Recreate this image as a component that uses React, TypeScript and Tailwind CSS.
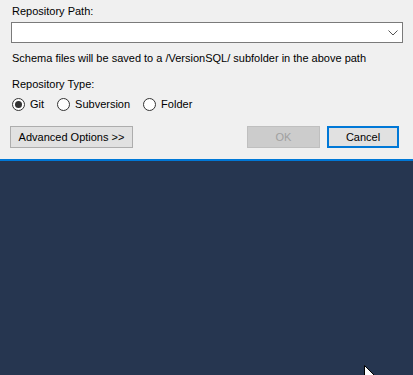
import React from 'react';

const Radio = ({ label, checked }: { label: string; checked?: boolean }) => (
  <label className="flex items-center gap-[5px]">
    <span className="w-[13px] h-[13px] rounded-full border border-[#333333] bg-white flex items-center justify-center">
      {checked && <span className="w-[7px] h-[7px] rounded-full bg-[#333333]" />}
    </span>
    <span>{label}</span>
  </label>
);

export default function App() {
  return (
    <div className="w-[413px] h-[375px] flex flex-col bg-[#263650] relative overflow-hidden text-[11px] text-black" style={{ fontFamily: '"Liberation Sans", Arial, sans-serif' }}>
      <div className="h-[161px] bg-[#f0f0f0] border-b-2 border-[#0078d7] shrink-0 px-[11px] pt-[4px]">
        <div className="pl-[1px] leading-[14px]">Repository Path:</div>
        <div className="mt-[4px] h-[21px] w-[392px] bg-white border border-[#7a7a7a] flex items-center justify-end pr-[4px]">
          <svg width="10" height="6" viewBox="0 0 10 6">
            <path d="M0.5 0.5 L5 5 L9.5 0.5" fill="none" stroke="#555555" strokeWidth="1" />
          </svg>
        </div>
        <div className="mt-[8px] pl-[1px] leading-[14px]">Schema files will be saved to a /VersionSQL/ subfolder in the above path</div>
        <div className="mt-[12px] pl-[1px] leading-[14px]">Repository Type:</div>
        <div className="mt-[6px] flex items-center gap-[13px] pl-[1px] leading-[14px]">
          <Radio label="Git" checked />
          <Radio label="Subversion" />
          <Radio label="Folder" />
        </div>
        <div className="mt-[15px] flex items-center ml-[-1px]">
          <button className="w-[123px] h-[22px] bg-[#e1e1e1] border border-[#adadad] leading-none">Advanced Options &gt;&gt;</button>
          <button className="ml-auto w-[73px] h-[22px] bg-[#cccccc] border border-[#bfbfbf] text-[#a0a0a0] leading-none" disabled>OK</button>
          <button className="ml-[7px] mr-[3px] w-[72px] h-[22px] bg-[#e1e1e1] border-2 border-[#0078d7] leading-none">Cancel</button>
        </div>
      </div>
      <svg className="absolute left-[364px] top-[365px]" width="12" height="19" viewBox="0 0 12 19">
        <path d="M0.5 0.5 L0.5 15.5 L4 12 L6.5 17.5 L8.5 16.5 L6 11 L11 11 Z" fill="white" stroke="black" strokeWidth="1" />
      </svg>
    </div>
  );
}
